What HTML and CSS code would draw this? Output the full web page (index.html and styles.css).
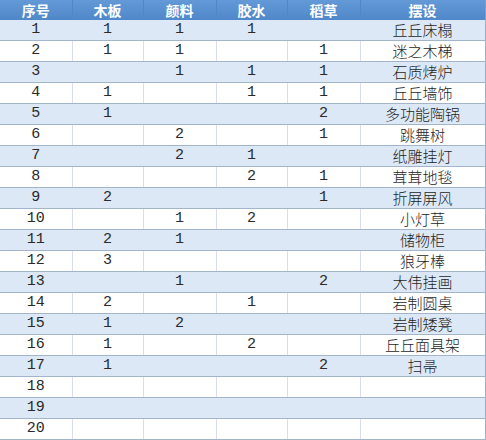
FILE: index.html
```html
<!DOCTYPE html>
<html lang="zh">
<head>
<meta charset="utf-8">
<link rel="stylesheet" href="styles.css">
</head>
<body>
<table class="grid">
<colgroup>
<col class="c1"><col class="c2"><col class="c3"><col class="c4"><col class="c5"><col class="c6">
</colgroup>
<thead>
<tr><th>序号</th><th>木板</th><th>颜料</th><th>胶水</th><th>稻草</th><th>摆设</th></tr>
</thead>
<tbody>
<tr><td>1</td><td>1</td><td>1</td><td>1</td><td></td><td class="name">丘丘床榻</td></tr>
<tr><td>2</td><td>1</td><td>1</td><td></td><td>1</td><td class="name">迷之木梯</td></tr>
<tr><td>3</td><td></td><td>1</td><td>1</td><td>1</td><td class="name">石质烤炉</td></tr>
<tr><td>4</td><td>1</td><td></td><td>1</td><td>1</td><td class="name">丘丘墙饰</td></tr>
<tr><td>5</td><td>1</td><td></td><td></td><td>2</td><td class="name">多功能陶锅</td></tr>
<tr><td>6</td><td></td><td>2</td><td></td><td>1</td><td class="name">跳舞树</td></tr>
<tr><td>7</td><td></td><td>2</td><td>1</td><td></td><td class="name">纸雕挂灯</td></tr>
<tr><td>8</td><td></td><td></td><td>2</td><td>1</td><td class="name">茸茸地毯</td></tr>
<tr><td>9</td><td>2</td><td></td><td></td><td>1</td><td class="name">折屏屏风</td></tr>
<tr><td>10</td><td></td><td>1</td><td>2</td><td></td><td class="name">小灯草</td></tr>
<tr><td>11</td><td>2</td><td>1</td><td></td><td></td><td class="name">储物柜</td></tr>
<tr><td>12</td><td>3</td><td></td><td></td><td></td><td class="name">狼牙棒</td></tr>
<tr><td>13</td><td></td><td>1</td><td></td><td>2</td><td class="name">大伟挂画</td></tr>
<tr><td>14</td><td>2</td><td></td><td>1</td><td></td><td class="name">岩制圆桌</td></tr>
<tr><td>15</td><td>1</td><td>2</td><td></td><td></td><td class="name">岩制矮凳</td></tr>
<tr><td>16</td><td>1</td><td></td><td>2</td><td></td><td class="name">丘丘面具架</td></tr>
<tr><td>17</td><td>1</td><td></td><td></td><td>2</td><td class="name">扫帚</td></tr>
<tr><td>18</td><td></td><td></td><td></td><td></td><td class="name"></td></tr>
<tr><td>19</td><td></td><td></td><td></td><td></td><td class="name"></td></tr>
<tr><td>20</td><td></td><td></td><td></td><td></td><td class="name"></td></tr>
</tbody>
</table>
</body>
</html>
```

FILE: styles.css
```css
html, body {
  margin: 0;
  padding: 0;
  background: #ffffff;
}
.grid {
  border-collapse: collapse;
  table-layout: fixed;
  width: 485px;
  font-family: "Liberation Mono", "Noto Sans CJK SC", monospace;
  color: #2a2a2a;
}
.c1 { width: 72px; }
.c2 { width: 71px; }
.c3 { width: 73px; }
.c4 { width: 71px; }
.c5 { width: 73px; }
.c6 { width: 125px; }
.grid th {
  height: 20px;
  padding: 0;
  background: linear-gradient(#6399d6, #5087c9);
  color: #ffffff;
  font-family: "Noto Sans CJK SC", sans-serif;
  font-weight: bold;
  font-size: 14px;
  line-height: 20px;
  text-align: center;
  border-right: 1px solid #5087c9;
}
.grid th:last-child {
  border-right: 1px solid #7f9fc4;
}
.grid td {
  height: 20px;
  padding: 0;
  font-size: 15px;
  line-height: 20px;
  text-align: center;
  border-bottom: 1px solid #a3b5cb;
  border-right: 1px solid #d9dee6;
  overflow: hidden;
  white-space: nowrap;
}
.grid td:last-child {
  border-right: 1px solid #9db0c8;
}
.grid tbody tr:nth-child(odd) td {
  background: #dce8f5;
  border-right-color: #dce8f5;
}
.grid tbody tr:nth-child(odd) td:last-child {
  border-right-color: #9db0c8;
}
.grid td.name {
  font-family: "Noto Sans CJK SC", sans-serif;
  font-weight: 300;
  font-size: 15px;
  color: #1e1e1e;
}
```
